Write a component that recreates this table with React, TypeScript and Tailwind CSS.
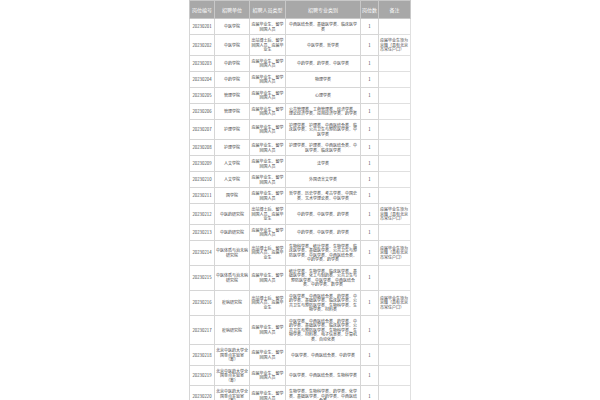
import React from "react";

type Row = [string, string, string, string, string, string];

const NOTE = "应届毕业生须为京籍（具有北京市常住户口）";
const A = "应届毕业生、留学回国人员";
const B = "出站博士后、留学回国人员、应届毕业生";
const LAB = "北京中医药大学全国重点实验室（筹）";

const rows: Row[] = [
  ["20230201", "中医学院", A, "中西医结合类、基础医学类、临床医学类", "1", ""],
  ["20230202", "中医学院", B, "中医学类、哲学类", "1", NOTE],
  ["20230203", "中药学院", A, "中药学类、药学类、中医学类", "1", ""],
  ["20230204", "中药学院", A, "物理学类", "1", ""],
  ["20230205", "管理学院", A, "心理学类", "1", ""],
  ["20230206", "管理学院", A, "公共管理类、工商管理类、经济学类、理论经济学类、应用经济学类、药学类", "1", ""],
  ["20230207", "护理学院", A, "护理学类、护理类、中西医结合类、临床医学类、公共卫生与预防医学类、中医学类", "1", ""],
  ["20230208", "护理学院", A, "护理学类、护理类、中西医结合类、中医学类、临床医学类", "1", ""],
  ["20230209", "人文学院", A, "法学类", "1", ""],
  ["20230210", "人文学院", A, "外国语言文学类", "1", ""],
  ["20230211", "国学院", A, "哲学类、历史学类、考古学类、中国史类、艺术学理论类、中医学类", "1", ""],
  ["20230212", "中医药研究院", B, "中药学类、中医学类、药学类", "1", NOTE],
  ["20230213", "中医药研究院", A, "中药学类、中医学类、药学类", "1", ""],
  ["20230214", "中医体质与治未病研究院", B, "生物科学类、统计学类、生物学类、临床医学类、基础医学类、公共卫生与预防医学类、中医学类、中西医结合类、中药学类、药学类", "1", NOTE],
  ["20230215", "中医体质与治未病研究院", A, "统计学类、生物学类、临床医学类、基础医学类、化工与制药类、公共卫生与预防医学类、中医学类、中西医结合类、中药学类、数学类", "1", ""],
  ["20230216", "疫病研究院", B, "中医学类、中西医结合类、药学类、中药学类、基础医学类、临床医学类、公共卫生与预防医学类、生物科学类、生物学类、材料类", "1", NOTE],
  ["20230217", "疫病研究院", A, "中医学类、中西医结合类、药学类、中药学类、基础医学类、临床医学类、公共卫生与预防医学类、生物科学类、生物学类、材料类、电子信息类、计算机类、自动化类", "1", ""],
  ["20230218", LAB, A, "中医学类、中西医结合类、中药学类", "1", ""],
  ["20230219", LAB, A, "中医学类、中西医结合类、生物科学类", "1", ""],
  ["20230220", LAB, A, "生物学类、生物科学类、药学类、化学类、基础医学类、中药学类、中西医结合类", "1", ""],
];

const headers = ["岗位编号", "招聘单位", "招聘人员类型", "招聘专业类别", "岗位数", "备注"];

function Unit({ name }: { name: string }) {
  if (name === LAB) {
    return (
      <>
        北京中医药大学全国重点实验室
        <br />
        （筹）
      </>
    );
  }
  return <>{name}</>;
}

export default function App() {
  return (
    <div className="w-[600px] h-[400px] overflow-hidden bg-white font-['Noto_Sans_CJK_SC','Noto_Sans',sans-serif]">
      <table className="ml-[189px] w-[221px] table-fixed border-collapse">
        <colgroup>
          <col className="w-[25px]" />
          <col className="w-[35px]" />
          <col className="w-[36px]" />
          <col className="w-[75px]" />
          <col className="w-[18px]" />
          <col className="w-[32px]" />
        </colgroup>
        <thead>
          <tr className="h-[18px] bg-[#a8a8a8]">
            {headers.map((h) => (
              <th
                key={h}
                className="border border-[#c8c8c8] px-0 text-center align-middle text-[5px] leading-[6px] font-normal text-white"
              >
                {h}
              </th>
            ))}
          </tr>
        </thead>
        <tbody>
          {rows.map((r) => (
            <tr key={r[0]}>
              <td className="border border-[#d6d6d6] px-[1px] py-[3px] text-center align-middle text-[4.3px] leading-[4.5px] text-[#444]">
                {r[0]}
              </td>
              <td className="border border-[#d6d6d6] px-0 py-[3px] text-center align-middle text-[4px] leading-[4.5px] text-[#444]">
                <Unit name={r[1]} />
              </td>
              <td className="border border-[#d6d6d6] px-[0.5px] py-[3px] text-center align-middle text-[4px] leading-[4.5px] text-[#444]">
                {r[2]}
              </td>
              <td className="border border-[#d6d6d6] px-[2.5px] py-[3px] text-center align-middle text-[4px] leading-[4.5px] text-[#444]">
                {r[3]}
              </td>
              <td className="border border-[#d6d6d6] px-[1px] py-[3px] text-center align-middle text-[4.3px] leading-[4.5px] text-[#444]">
                {r[4]}
              </td>
              <td className="border border-[#e0e0e0] px-[1px] py-[3px] text-left align-middle text-[4px] leading-[4.5px] text-[#444]">
                {r[5]}
              </td>
            </tr>
          ))}
        </tbody>
      </table>
    </div>
  );
}
